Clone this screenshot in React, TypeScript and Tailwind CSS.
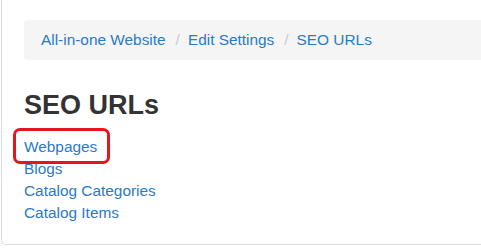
import React from "react";

const crumbs = ["All-in-one Website", "Edit Settings", "SEO URLs"];
const links = ["Webpages", "Blogs", "Catalog Categories", "Catalog Items"];

export default function App() {
  return (
    <div className="w-[481px] h-[249px] bg-white overflow-hidden font-['Liberation_Sans',Arial,sans-serif]">
      <div className="ml-px h-[245px] border-l border-b border-[#dcdcdc] rounded-bl-[5px] pl-[22px] pt-[20px] relative">
        <ol className="flex items-center h-[40px] bg-[#f5f5f5] rounded-l-[4px] pl-[17px] text-[15.4px] text-[#2a7ac6]">
          {crumbs.map((c, i) => (
            <li key={c} className="flex items-center">
              {i > 0 && <span className="text-[#cccccc] pl-[10px] pr-[8px]">/</span>}
              <a href="#">{c}</a>
            </li>
          ))}
        </ol>
        <h1 className="mt-[29px] text-[27px] leading-[32px] font-bold text-[#333333]">SEO URLs</h1>
        <ul className="mt-[15px] text-[15.4px] leading-[22px] text-[#2a7ac6]">
          {links.map((l) => (
            <li key={l}>
              <a href="#">{l}</a>
            </li>
          ))}
        </ul>
        {/* annotation around the first link */}
        <div className="absolute left-[11px] top-[128px] w-[97px] h-[36px] border-[3px] border-[#e8141b] rounded-[7px]" />
      </div>
    </div>
  );
}
